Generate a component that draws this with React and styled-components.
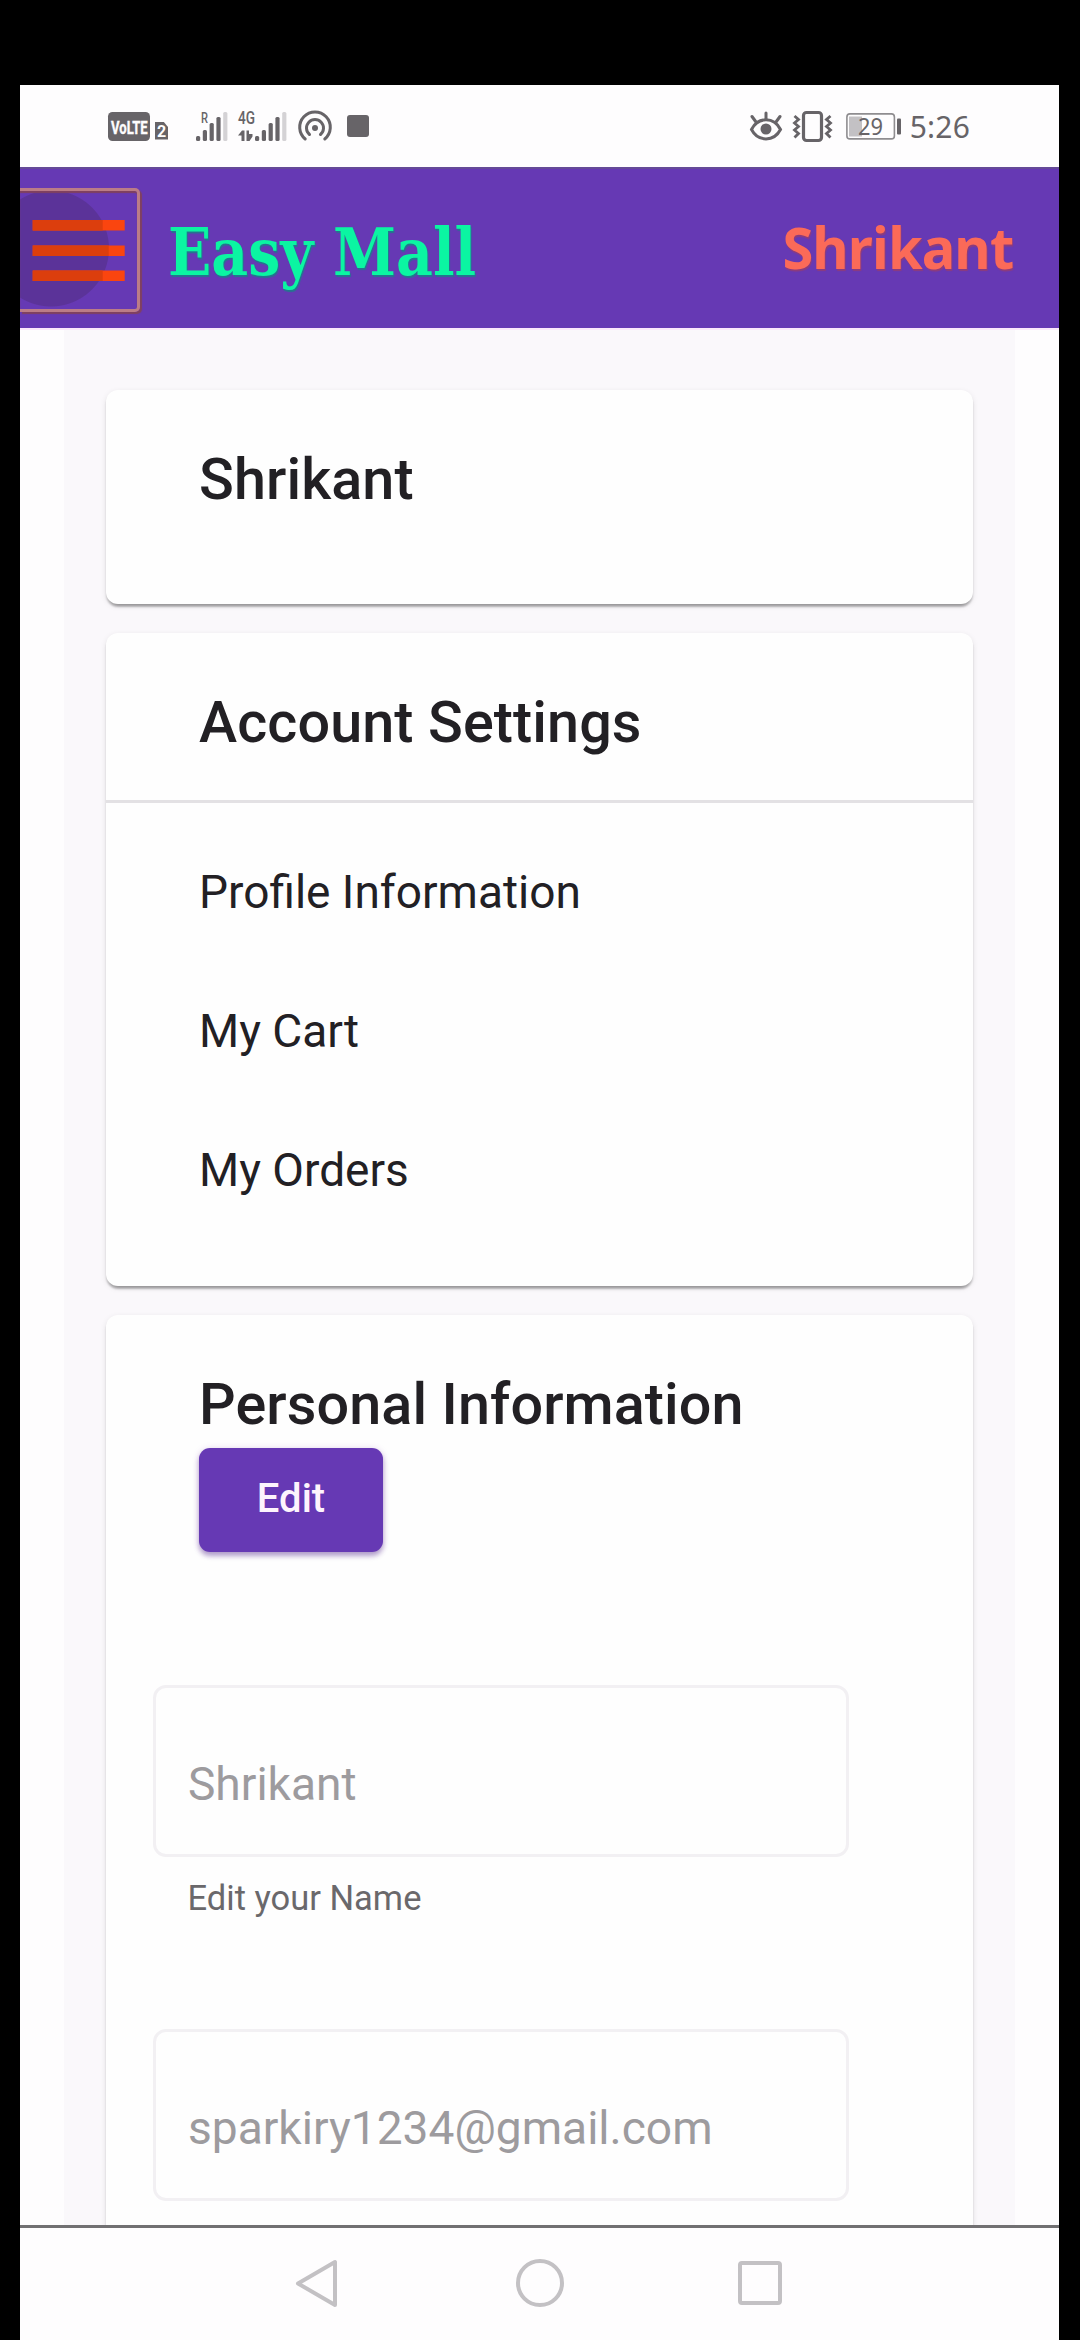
import React from "react";
import styled, { createGlobalStyle } from "styled-components";

const GlobalStyle = createGlobalStyle`
  * { box-sizing: border-box; }
  html, body { margin: 0; padding: 0; background: #000; }
  body { font-family: Roboto, "Liberation Sans", sans-serif; }
`;

const Device = styled.div`
  display: flex;
  flex-direction: column;
  width: 1080px;
  height: 2340px;
  padding: 85px 21px 0 20px;
  background: #000;
  overflow: hidden;
`;

const StatusBar = styled.header`
  display: flex;
  flex: none;
  align-items: center;
  justify-content: space-between;
  height: 82px;
  padding: 0 89px 0 88px;
  background: #fefdfe;
  color: #676468;
`;

const StatusGroup = styled.div`
  display: flex;
  align-items: center;
`;

const SimBadge = styled.span`
  width: 13px;
  height: 18px;
  margin: 9px 28px 0 5px;
  background: #676468;
  clip-path: polygon(0 0, 65% 0, 100% 30%, 100% 100%, 0 100%);
  color: #fefdfe;
  font: 700 16px/19px Roboto, sans-serif;
  text-align: center;
`;

const Glyph = styled.svg`
  display: block;
  flex: none;
  overflow: visible;
  margin-left: ${(p) => p.$gap || 0}px;
`;

const Clock = styled.span`
  margin-left: 9px;
  padding-top: 2px;
  font: 400 30px/40px "Noto Sans", sans-serif;
  letter-spacing: 0.2px;
`;

const AppBar = styled.nav`
  display: flex;
  flex: none;
  align-items: center;
  height: 161px;
  background: #6639b4;
  border-top: 2px solid #654a97;
  overflow: hidden;
`;

const MenuButton = styled.button`
  display: flex;
  flex: none;
  align-items: center;
  width: 120px;
  height: 124px;
  margin: 3px 0 0 0;
  padding: 0;
  background: radial-gradient(circle at 31px 57.5px, #5b3399 57.5px, transparent 58.5px);
  border: 3px solid #bb7c87;
  border-left: 0;
  border-radius: 0 5px 5px 0;
  box-shadow: 2px 2px 1px #80415f, inset 0 2px 1px #80415f;
`;

const Brand = styled.h1`
  flex: none;
  width: 306px;
  margin: 0 0 0 28px;
  padding-top: 6px;
  color: #0bf5a2;
  font: 700 65px/80px "DejaVu Serif", serif;
  font-stretch: condensed;
  white-space: nowrap;
  text-shadow: 1px 2px 1px #24758f;
`;

const BrandText = styled.span`
  display: inline-block;
  transform: scaleX(0.973);
  transform-origin: left center;
`;

const UserName = styled.span`
  margin: 0 46px 4px auto;
  color: #fb6a58;
  font: 700 58px/80px "Noto Sans", sans-serif;
  letter-spacing: -0.9px;
  text-shadow: 1px 2px 1px #8d3c7c;
  transform: scaleX(0.965);
  transform-origin: right center;
`;

const Page = styled.main`
  flex: 1;
  min-height: 0;
  padding: 0 44px;
  background: #fefdfe;
  border-top: 2px solid #fbe8fc;
  overflow: hidden;
`;

const Panel = styled.div`
  display: flex;
  flex-direction: column;
  gap: 29px;
  height: 100%;
  padding: 60px 42px 0;
  background: #faf8fb;
`;

const Card = styled.section`
  flex: none;
  height: ${(p) => p.$height}px;
  border-radius: 12px;
  background: #fefefe;
  box-shadow: 0 5px 3px -3px rgba(0, 0, 0, 0.24), 0 3px 2px rgba(0, 0, 0, 0.16),
    0 2px 6px rgba(0, 0, 0, 0.09);
`;

const CardHeader = styled.div`
  height: ${(p) => (p.$divided ? "170px" : "auto")};
  padding: 46px 93px 0;
  border-bottom: ${(p) => (p.$divided ? "3px solid #e3e1e4" : "0")};
`;

const Title = styled.h2`
  margin: 0;
  color: #222024;
  font-size: 57.5px;
  font-weight: 500;
  line-height: 87px;
  letter-spacing: 0.1px;
  white-space: nowrap;
`;

const Menu = styled.ul`
  margin: 0;
  padding: 20px 93px 0;
  list-style: none;
`;

const MenuItem = styled.li`
  height: 139px;
  color: #222024;
  font-size: 46px;
  line-height: 139px;
`;

const EditButton = styled.button`
  display: block;
  width: 184px;
  height: 104px;
  padding: 0 0 3px;
  border: 0;
  border-radius: 11px;
  background: #6639b4;
  color: #fdf4fd;
  font: 500 40px/100px Roboto, sans-serif;
  box-shadow: 0 4px 5px rgba(70, 30, 130, 0.36), 0 1px 7px rgba(120, 40, 170, 0.2);
`;

const Form = styled.form`
  display: flex;
  flex-direction: column;
  gap: 106px;
  padding: 133px 0 0 47px;
`;

const Field = styled.label`
  display: block;
`;

const Input = styled.input`
  display: block;
  width: 696px;
  height: 172px;
  padding: 26px 31px 0 32px;
  border: 3px solid #f2f0f3;
  border-radius: 13px;
  background: transparent;
  color: #9d9b9e;
  font: 400 46.100px/60px Roboto, sans-serif;
`;

const Hint = styled.span`
  display: block;
  padding: 16px 34.500px 0;
  color: #6a686b;
  font-size: 34.500px;
  line-height: 50px;
`;

const NavBar = styled.footer`
  display: flex;
  flex: none;
  align-items: center;
  height: 115px;
  padding-left: 275px;
  background: #fefdfe;
  border-top: 3px solid #717072;
`;

const bars = [5, 11, 18, 24, 29];

const VolteBadge = () => (
  <Glyph width="42" height="29" viewBox="0 0 42 29">
    <rect width="42" height="29" rx="4.500" fill="currentColor" />
    <text
      transform="translate(3 21.500) scale(0.720 1)"
      fill="#fefdfe"
      stroke="#fefdfe"
      strokeWidth="0.400"
      fontFamily="Roboto"
      fontWeight="700"
      fontSize="19"
      textLength="51"
      lengthAdjust="spacingAndGlyphs"
    >
      VoLTE
    </text>
  </Glyph>
);

const Signal = ({ network, data, width, start, gap }) => (
  <Glyph width={width} height="30" viewBox={`0 0 ${width} 30`} $gap={gap} fill="currentColor">
    <text
      x={data ? 0 : 5}
      y={data ? 13 : 11.5}
      fontFamily="Roboto"
      fontSize={data ? 18 : 15}
      fontWeight="500"
      textLength={data ? 17 : 7}
      lengthAdjust="spacingAndGlyphs"
    >
      {network}
    </text>
    {data && (
      <path d="M0 24.500l4-5h2.500V30H3.500v-5.500zM8.500 19.500H11V23h3.500v2.500l-3 4.500h-3z" />
    )}
    {bars.map((h, i) => (
      <rect
        key={h}
        x={start + i * 6.8}
        y={30 - h}
        width="4.200"
        height={h}
        rx="1.500"
        fill={i === 4 ? "#d4d2d5" : "currentColor"}
      />
    ))}
  </Glyph>
);

const Hotspot = () => (
  <Glyph width="34" height="30" viewBox="0 0 34 30" $gap={11} fill="none" stroke="currentColor" strokeWidth="3" strokeLinecap="round">
    <path d="M7.200 28A15.300 15.300 0 1 1 26.800 28" />
    <path d="M11.500 23.500A8.500 8.500 0 1 1 22.500 23.500" />
    <circle cx="17" cy="17" r="3" fill="currentColor" stroke="none" />
  </Glyph>
);

const StopSquare = () => (
  <Glyph width="22" height="22" viewBox="0 0 22 22" $gap={15} fill="currentColor">
    <rect width="22" height="22" rx="3" />
  </Glyph>
);

const EyeComfort = () => (
  <Glyph width="32" height="28" viewBox="0 0 32 28" fill="none" stroke="currentColor" strokeWidth="3" strokeLinecap="round">
    <path d="M1.500 17.500C8 4.500 24 4.500 30.500 17.500C24 30 8 30 1.500 17.500Z" />
    <circle cx="16" cy="17" r="5.500" fill="currentColor" stroke="none" />
    <path d="M16 1v6M2 4.500l4 5.500M30 4.500L26 10" />
  </Glyph>
);

const Vibrate = () => (
  <Glyph width="39" height="31" viewBox="0 0 39 31" $gap={11} fill="none" stroke="currentColor" strokeWidth="2.800">
    <rect x="10.500" y="1.500" width="18" height="28" rx="3" strokeWidth="3.200" />
    <path d="M1.500 5l4 3.500-4 3.500 4 3.500-4 3.500 4 3.500-4 4M37.500 5l-4 3.500 4 3.500-4 3.500 4 3.500-4 3.500 4 4" />
  </Glyph>
);

const Battery = ({ level }) => (
  <Glyph width="55" height="27" viewBox="0 0 55 27" $gap={14} fill="currentColor">
    <rect x="0.900" y="0.900" width="47.500" height="25" rx="3" fill="none" stroke="#8f8d90" strokeWidth="1.600" />
    <rect x="3" y="3.500" width="13" height="20" fill="#c3c1c4" />
    <text x="12" y="21.500" fontFamily="Noto Sans" fontSize="23" textLength="25" lengthAdjust="spacingAndGlyphs">
      {level}
    </text>
    <rect x="51" y="5.500" width="4" height="16" rx="1" />
  </Glyph>
);

const Hamburger = () => (
  <Glyph width="117" height="61" viewBox="0 0 117 61">
    {[0, 25.5, 50.5].map((y) => (
      <g key={y}>
        <rect x="12.700" y={y} width="92" height="10.500" fill="#fa450f" />
        <rect x="12.700" y={y} width={y === 25.5 ? 76 : 70} height="10.500" fill="#dc3e0d" />
      </g>
    ))}
  </Glyph>
);

const BackIcon = () => (
  <Glyph width="43" height="50" viewBox="0 0 43 50" fill="none" stroke="#c3c1c4" strokeWidth="4" strokeLinejoin="round">
    <path d="M40 3v43L3 24.500z" />
  </Glyph>
);

const HomeIcon = () => (
  <Glyph width="48" height="48" viewBox="0 0 48 48" $gap={177.5} fill="none" stroke="#c3c1c4" strokeWidth="4">
    <circle cx="24" cy="23" r="22" />
  </Glyph>
);

const RecentsIcon = () => (
  <Glyph width="44" height="44" viewBox="0 0 44 44" $gap={174.5} fill="none" stroke="#c3c1c4" strokeWidth="4">
    <rect x="2" y="1" width="40" height="40" rx="2" />
  </Glyph>
);

const menuItems = ["Profile Information", "My Cart", "My Orders"];

export default function App() {
  return (
    <>
      <GlobalStyle />
      <Device>
        <StatusBar>
          <StatusGroup>
            <VolteBadge />
            <SimBadge>2</SimBadge>
            <Signal network="R" width={32} start={0} gap={0} />
            <Signal network="4G" data width={49} start={17} gap={10} />
            <Hotspot />
            <StopSquare />
          </StatusGroup>
          <StatusGroup>
            <EyeComfort />
            <Vibrate />
            <Battery level="29" />
            <Clock>5:26</Clock>
          </StatusGroup>
        </StatusBar>

        <AppBar>
          <MenuButton aria-label="Menu">
            <Hamburger />
          </MenuButton>
          <Brand>
            <BrandText>Easy Mall</BrandText>
          </Brand>
          <UserName>Shrikant</UserName>
        </AppBar>

        <Page>
          <Panel>
            <Card $height={214}>
              <CardHeader>
                <Title>Shrikant</Title>
              </CardHeader>
            </Card>
            <Card $height={653}>
              <CardHeader $divided>
                <Title>Account Settings</Title>
              </CardHeader>
              <Menu>
                {menuItems.map((item) => (
                  <MenuItem key={item}>{item}</MenuItem>
                ))}
              </Menu>
            </Card>
            <Card $height={1100}>
              <CardHeader>
                <Title>Personal Information</Title>
                <EditButton>Edit</EditButton>
              </CardHeader>
              <Form>
                <Field>
                  <Input disabled defaultValue="Shrikant" />
                  <Hint>Edit your Name</Hint>
                </Field>
                <Field>
                  <Input disabled defaultValue="sparkiry1234@gmail.com" />
                </Field>
              </Form>
            </Card>
          </Panel>
        </Page>

        <NavBar>
          <BackIcon />
          <HomeIcon />
          <RecentsIcon />
        </NavBar>
      </Device>
    </>
  );
}
